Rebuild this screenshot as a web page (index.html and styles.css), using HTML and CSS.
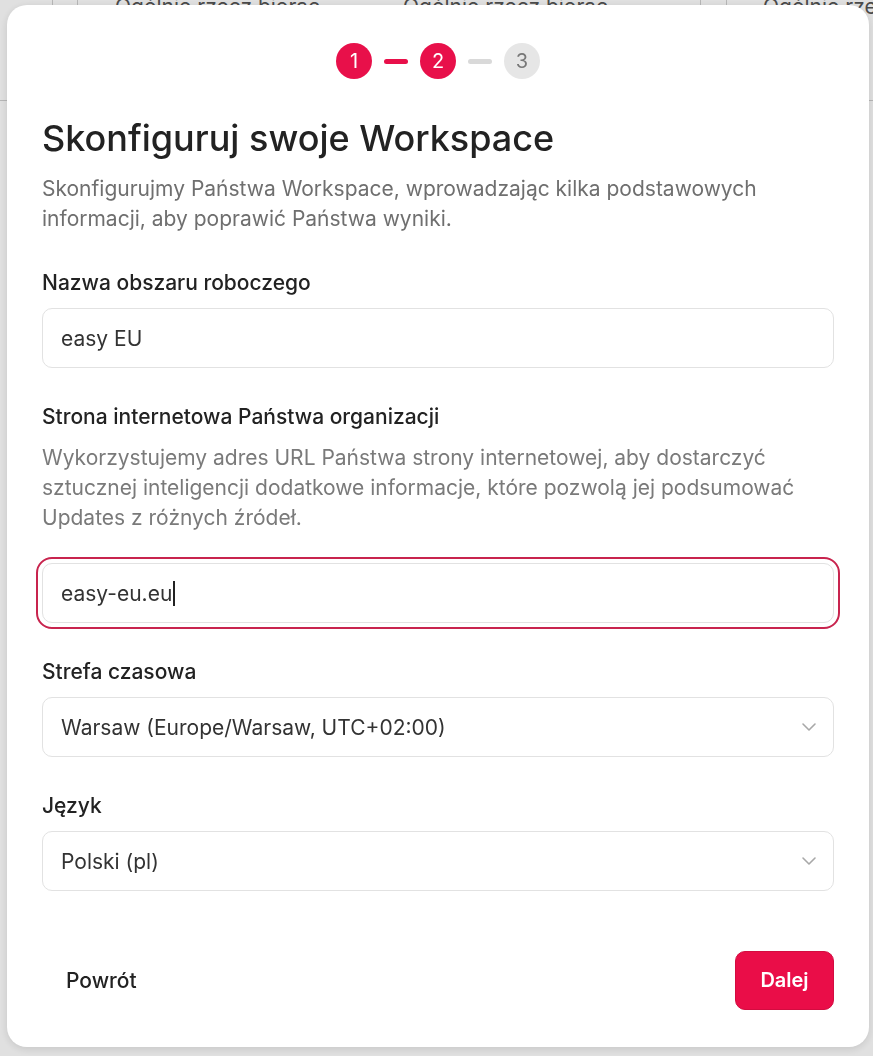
FILE: index.html
```html
<!DOCTYPE html>
<html lang="pl">
<head>
<meta charset="utf-8">
<link rel="stylesheet" href="styles.css">
</head>
<body>
<div class="page">
  <div class="table-head">
    <div class="cell c1"></div>
    <div class="cell c2"></div>
    <div class="cell c3">Ogólnie rzecz biorąc</div>
    <div class="cell c4">Ogólnie rzecz biorąc</div>
    <div class="cell c5"></div>
    <div class="cell c6">Ogólnie rzecz biorąc</div>
  </div>
  <div class="table-line"></div>
</div>
<div class="overlay">
  <div class="modal">
    <div class="steps">
      <span class="step active">1</span>
      <span class="bar active"></span>
      <span class="step active">2</span>
      <span class="bar"></span>
      <span class="step">3</span>
    </div>
    <h1 class="title">Skonfiguruj swoje Workspace</h1>
    <p class="subtitle">Skonfigurujmy Państwa Workspace, wprowadzając kilka podstawowych informacji, aby poprawić Państwa wyniki.</p>

    <div class="field">
      <label class="label">Nazwa obszaru roboczego</label>
      <div class="input">easy EU</div>
    </div>

    <div class="field">
      <label class="label">Strona internetowa Państwa organizacji</label>
      <p class="help">Wykorzystujemy adres URL Państwa strony internetowej, aby dostarczyć sztucznej inteligencji dodatkowe informacje, które pozwolą jej podsumować Updates z różnych źródeł.</p>
      <div class="input focused">easy-eu.eu<span class="caret"></span></div>
    </div>

    <div class="field">
      <label class="label">Strefa czasowa</label>
      <div class="input select">Warsaw (Europe/Warsaw, UTC+02:00)
        <svg class="chev" width="16" height="10" viewBox="0 0 16 10"><path d="M2 2l6 6 6-6" fill="none" stroke="#a8a8a8" stroke-width="1.6" stroke-linecap="round" stroke-linejoin="round"/></svg>
      </div>
    </div>

    <div class="field">
      <label class="label">Język</label>
      <div class="input select">Polski (pl)
        <svg class="chev" width="16" height="10" viewBox="0 0 16 10"><path d="M2 2l6 6 6-6" fill="none" stroke="#a8a8a8" stroke-width="1.6" stroke-linecap="round" stroke-linejoin="round"/></svg>
      </div>
    </div>

    <div class="footer">
      <button class="back">Powrót</button>
      <button class="next">Dalej</button>
    </div>
  </div>
</div>
</body>
</html>
```

FILE: styles.css
```css
* { box-sizing: border-box; }
html, body { margin: 0; padding: 0; }
body {
  width: 873px;
  height: 1056px;
  overflow: hidden;
  background: #fff;
  font-family: Inter, "Noto Sans", sans-serif;
  color: #222;
}
.page { position: relative; }
.table-head {
  display: flex;
  height: 108px;
  margin-top: -8px;
}
.cell {
  font-size: 21px;
  color: #555;
  line-height: 30px;
  white-space: nowrap;
}
.c1 { width: 53px; border-right: 1px solid #d0d0d0; }
.c2 { width: 25px; border-right: 1px solid #d0d0d0; }
.c3 { width: 325px; padding-left: 37px; }
.c4 { width: 298px; border-right: 1px solid #d0d0d0; }
.c5 { width: 26px; border-right: 1px solid #d0d0d0; }
.c6 { flex: 1; padding-left: 36px; overflow: hidden; }
.table-line { height: 1px; background: #d0d0d0; }

.overlay {
  position: fixed;
  inset: 0;
  background: rgba(0, 0, 0, 0.12);
  padding: 5px 4px 0 7px;
}
.modal {
  width: 862px;
  height: 1042px;
  background: #fff;
  border-radius: 20px;
  box-shadow: 0 2px 8px rgba(0,0,0,0.12);
  padding: 38px 35px 37px 35px;
  display: flex;
  flex-direction: column;
}
.steps {
  display: flex;
  justify-content: center;
  align-items: center;
  gap: 12px;
  height: 36px;
}
.step {
  width: 36px;
  height: 36px;
  border-radius: 50%;
  background: #e6e6e6;
  color: #777;
  font-size: 20px;
  display: flex;
  align-items: center;
  justify-content: center;
}
.step.active { background: #e8104a; color: #fff; }
.bar {
  width: 24px;
  height: 5px;
  border-radius: 3px;
  background: #d9d9d9;
}
.bar.active { background: #e8104a; }
.title {
  margin: 39px 0 0;
  font-size: 36px;
  line-height: 40px;
  font-weight: 500;
  color: #222;
}
.subtitle {
  margin: 16px 0 0;
  font-size: 21px;
  line-height: 30px;
  color: #6f6f6f;
}
.field { margin-top: 36px; }
.label {
  display: block;
  font-size: 21px;
  line-height: 26px;
  font-weight: 500;
  color: #222;
}
.help {
  margin: 13px -8px 0 0;
  font-size: 21px;
  line-height: 30px;
  color: #7a7a7a;
}
.input {
  margin-top: 12px;
  height: 60px;
  border: 1px solid #e2e2e2;
  border-radius: 10px;
  padding: 0 18px;
  display: flex;
  align-items: center;
  font-size: 21px;
  color: #333;
}
.input.focused {
  margin-top: 30px;
  outline: 2px solid #c8244e;
  outline-offset: 4px;
}
.caret {
  display: inline-block;
  width: 1.5px;
  height: 25px;
  background: #222;
  margin-left: 1px;
}
.select { justify-content: space-between; }
.chev { margin-right: -2px; }
.footer {
  margin-top: auto;
  display: flex;
  justify-content: space-between;
  align-items: center;
}
.back {
  background: none;
  border: none;
  font-family: inherit;
  font-size: 21px;
  font-weight: 500;
  color: #222;
  padding: 0 24px;
  height: 60px;
}
.next {
  width: 99px;
  height: 59px;
  border: 1px solid #d30c40;
  border-radius: 10px;
  background: #ea0d48;
  color: #fff;
  font-family: inherit;
  font-size: 20px;
  font-weight: 600;
}
```
